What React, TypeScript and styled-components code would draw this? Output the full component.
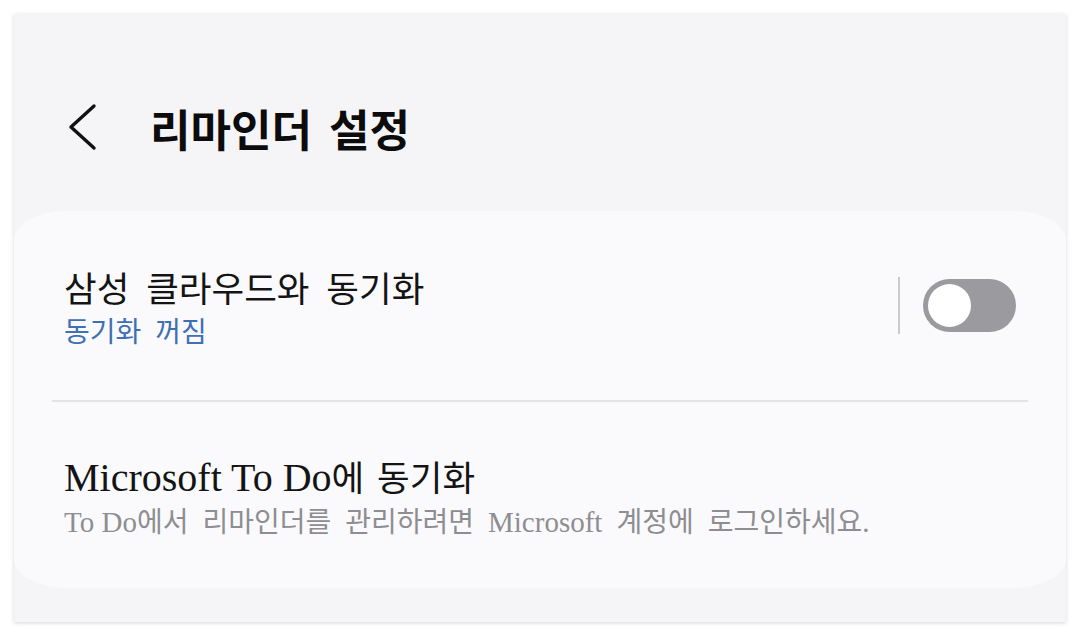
import React from 'react';
import styled, { createGlobalStyle } from 'styled-components';

const GlobalStyle = createGlobalStyle`
  html, body {
    margin: 0;
    padding: 0;
    background: #ffffff;
  }
  body {
    font-family: "Liberation Serif", "Noto Sans CJK KR", serif;
    color: #111111;
  }
`;

const Screen = styled.div`
  width: 1080px;
  height: 637px;
  padding: 14px;
  box-sizing: border-box;
`;

const Panel = styled.div`
  height: 608px;
  background: #f5f5f7;
  box-shadow: 0 1px 4px rgba(0, 0, 0, 0.16);
  display: flex;
  flex-direction: column;
  overflow: hidden;
`;

const Header = styled.header`
  height: 197px;
  flex-shrink: 0;
  display: flex;
  align-items: center;
  padding: 32px 0 0 52px;
  box-sizing: border-box;
  gap: 48px;
`;

const BackButton = styled.button`
  width: 36px;
  height: 52px;
  padding: 0;
  border: none;
  background: none;
  display: flex;
  align-items: center;
  justify-content: center;
  margin-top: -4px;
`;

const Title = styled.h1`
  margin: 8px 0 0;
  font-size: 44px;
  line-height: 52px;
  font-weight: 700;
  color: #0c0c0c;
  word-spacing: 6px;
`;

const Card = styled.section`
  height: 377px;
  flex-shrink: 0;
  background: #fafafc;
  border-radius: 52px / 30px;
  display: flex;
  flex-direction: column;
`;

const Row = styled.div<{ $height: number }>`
  height: ${p => p.$height}px;
  display: flex;
  align-items: center;
  padding: 0 50px;
  box-sizing: border-box;
`;

const TextBlock = styled.div`
  flex: 1;
  display: flex;
  flex-direction: column;
  gap: 6px;
  padding-top: 8px;
`;

const RowTitle = styled.div<{ $spacing: number }>`
  font-size: 35.5px;
  line-height: 40px;
  color: #141414;
  word-spacing: ${p => p.$spacing}px;
  white-space: nowrap;
`;

const RowSub = styled.div<{ $accent?: boolean }>`
  font-size: 28px;
  line-height: 34px;
  color: ${p => (p.$accent ? '#3f70b4' : '#8e8e92')};
  word-spacing: 7px;
  white-space: nowrap;
`;

const Latin = styled.span<{ $size: number }>`
  font-size: ${p => p.$size}px;
  word-spacing: normal;
`;

const Divider = styled.hr`
  margin: 0 38px;
  border: none;
  height: 2px;
  background: #e3e3e6;
  flex-shrink: 0;
`;

const SwitchArea = styled.div`
  display: flex;
  align-items: center;
  gap: 23px;
`;

const VRule = styled.div`
  width: 2px;
  height: 57px;
  background: #cacacc;
`;

const Track = styled.div<{ $on: boolean }>`
  width: 93px;
  height: 53px;
  border-radius: 27px;
  background: ${p => (p.$on ? '#3e91ff' : '#9b9a9f')};
  display: flex;
  align-items: center;
  justify-content: ${p => (p.$on ? 'flex-end' : 'flex-start')};
  padding: 0 5px;
  box-sizing: border-box;
`;

const Knob = styled.div`
  width: 43px;
  height: 43px;
  border-radius: 50%;
  background: #ffffff;
`;

export default function App() {
  return (
    <>
      <GlobalStyle />
      <Screen>
        <Panel>
          <Header>
            <BackButton aria-label="뒤로">
              <svg width="36" height="52" viewBox="0 0 36 52" fill="none">
                <polyline
                  points="28,5 5,26 28,47"
                  stroke="#111"
                  strokeWidth="3.4"
                  strokeLinecap="round"
                  strokeLinejoin="round"
                />
              </svg>
            </BackButton>
            <Title>리마인더 설정</Title>
          </Header>
          <Card>
            <Row $height={189}>
              <TextBlock>
                <RowTitle $spacing={8}>삼성 클라우드와 동기화</RowTitle>
                <RowSub $accent>동기화 꺼짐</RowSub>
              </TextBlock>
              <SwitchArea>
                <VRule />
                <Track $on={false}>
                  <Knob />
                </Track>
              </SwitchArea>
            </Row>
            <Divider />
            <Row $height={186}>
              <TextBlock>
                <RowTitle $spacing={4}>
                  <Latin $size={40}>Microsoft To Do</Latin>에 동기화
                </RowTitle>
                <RowSub>
                  <Latin $size={29}>To Do</Latin>에서 리마인더를 관리하려면 <Latin $size={29}>Microsoft</Latin> 계정에 로그인하세요<Latin $size={29}>.</Latin>
                </RowSub>
              </TextBlock>
            </Row>
          </Card>
        </Panel>
      </Screen>
    </>
  );
}
